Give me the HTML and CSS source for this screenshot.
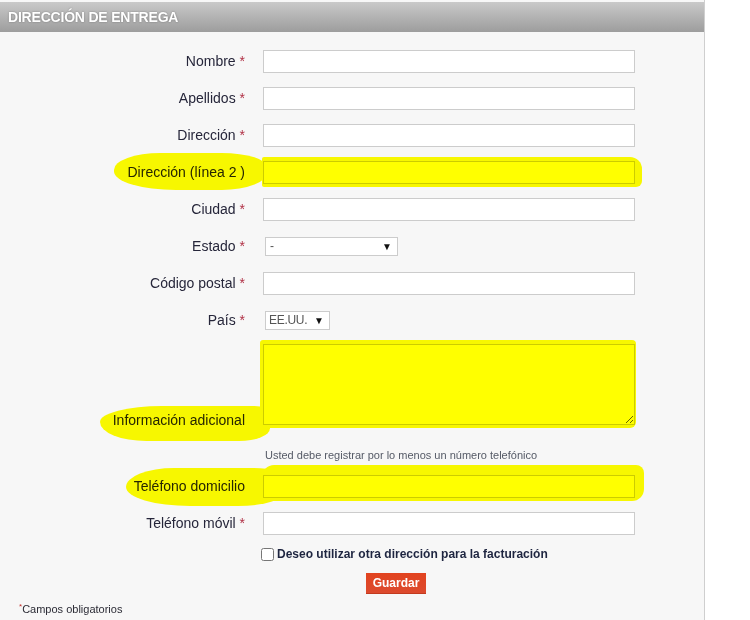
FILE: index.html
```html
<!DOCTYPE html>
<html lang="es">
<head>
<meta charset="utf-8">
<title>Dirección de entrega</title>
<link rel="stylesheet" href="styles.css">
</head>
<body>
<div class="panel">
  <h2 class="panel-title">DIRECCIÓN DE ENTREGA</h2>
  <form class="form">
    <div class="row">
      <label class="lbl">Nombre <span class="req">*</span></label>
      <input class="txt" type="text">
    </div>
    <div class="row">
      <label class="lbl">Apellidos <span class="req">*</span></label>
      <input class="txt" type="text">
    </div>
    <div class="row">
      <label class="lbl">Dirección <span class="req">*</span></label>
      <input class="txt" type="text">
    </div>
    <div class="row">
      <label class="lbl">Dirección (línea 2 )</label>
      <input class="txt" type="text">
    </div>
    <div class="row">
      <label class="lbl">Ciudad <span class="req">*</span></label>
      <input class="txt" type="text">
    </div>
    <div class="row">
      <label class="lbl">Estado <span class="req">*</span></label>
      <div class="sel sel-estado"><span class="sel-val">-</span><span class="sel-arrow">▼</span></div>
    </div>
    <div class="row">
      <label class="lbl">Código postal <span class="req">*</span></label>
      <input class="txt" type="text">
    </div>
    <div class="row row-pais">
      <label class="lbl">País <span class="req">*</span></label>
      <div class="sel sel-pais"><span class="sel-val">EE.UU.</span><span class="sel-arrow">▼</span></div>
    </div>
    <div class="row row-area">
      <label class="lbl">Información adicional</label>
      <textarea class="area"></textarea>
    </div>
    <div class="row row-help">
      <span></span>
      <p class="help">Usted debe registrar por lo menos un número telefónico</p>
    </div>
    <div class="row">
      <label class="lbl">Teléfono domicilio</label>
      <input class="txt" type="text">
    </div>
    <div class="row">
      <label class="lbl">Teléfono móvil <span class="req">*</span></label>
      <input class="txt" type="text">
    </div>
    <div class="row row-check">
      <span></span>
      <label class="check"><input type="checkbox" class="cb"> Deseo utilizar otra dirección para la facturación</label>
    </div>
    <div class="row row-btn">
      <span></span>
      <div><button type="button" class="btn">Guardar</button></div>
    </div>
    <p class="note"><span class="req-s">*</span>Campos obligatorios</p>
  </form>
  <div class="hl hl-1a"></div>
  <div class="hl hl-1b"></div>
  <div class="hl hl-2a"></div>
  <div class="hl hl-2b"></div>
  <div class="hl hl-3a"></div>
  <div class="hl hl-3b"></div>
</div>
</body>
</html>
```
FILE: styles.css
```css
html, body {
  margin: 0;
  padding: 0;
  background: #ffffff;
}
body {
  font-family: "Liberation Sans", Arial, sans-serif;
  color: #2b2b35;
}
.panel {
  position: relative;
  width: 705px;
  height: 620px;
  box-sizing: border-box;
  padding-top: 2px;
  background: #f7f7f7;
  border-right: 1px solid #cfcfcf;
  overflow: hidden;
}
.panel-title {
  margin: 0;
  height: 30px;
  line-height: 31px;
  padding-left: 8px;
  font-size: 14px;
  font-weight: bold;
  letter-spacing: -0.2px;
  color: #ffffff;
  background: linear-gradient(#c9c9c9, #9d9d9d);
  text-shadow: 0 0 2px rgba(0, 0, 0, 0.35);
}
.form {
  padding-top: 18px;
  margin: 0;
}
.row {
  display: grid;
  grid-template-columns: 245px 372px;
  column-gap: 18px;
  align-items: center;
  margin-bottom: 14px;
}
.lbl {
  text-align: right;
  font-size: 14px;
  line-height: 16px;
  margin-top: -1px;
  color: #26263a;
}
.req {
  color: #b03045;
}
.txt {
  display: block;
  box-sizing: border-box;
  width: 372px;
  height: 23px;
  margin: 0;
  border: 1px solid #cccccc;
  background: #ffffff;
  outline: none;
}
.sel {
  position: relative;
  box-sizing: border-box;
  height: 19px;
  margin: 2px 0 2px 2px;
  border: 1px solid #cccccc;
  background: #ffffff;
  font-size: 12px;
  color: #555;
  line-height: 17px;
  padding-left: 4px;
}
.sel-estado { width: 133px; }
.sel-pais { width: 65px; padding-left: 3px; letter-spacing: -0.3px; }
.sel-arrow {
  position: absolute;
  right: 5px;
  top: 0;
  font-size: 10px;
  color: #111;
  letter-spacing: 0;
}
.row-pais { margin-bottom: 12px; }
.row-area { align-items: end; margin-bottom: 24px; }
.row-area .lbl { margin-bottom: -3px; }
.area {
  display: block;
  box-sizing: border-box;
  width: 372px;
  height: 81px;
  margin: 0;
  border: 1px solid #cccccc;
  background: #ffffff;
  resize: both;
  outline: none;
}
.row-help { margin-bottom: 13px; }
.help {
  margin: 0 0 0 2px;
  font-size: 11px;
  line-height: 13px;
  color: #555a66;
}
.row-check { margin-top: -2px; margin-bottom: 12px; }
.check {
  display: flex;
  align-items: center;
  margin-left: -2px;
  font-size: 12px;
  font-weight: bold;
  color: #1e2540;
  gap: 3px;
}
.cb {
  width: 13px;
  height: 13px;
  margin: 0;
}
.row-btn { margin-bottom: 0; }
.btn {
  margin-left: 103px;
  width: 60px;
  height: 21px;
  padding: 0;
  border: none;
  border-bottom: 1px solid #c23a1f;
  background: linear-gradient(#e2431f, #dc4a2e);
  color: #ffffff;
  font-family: "Liberation Sans", Arial, sans-serif;
  font-size: 12px;
  font-weight: bold;
  cursor: pointer;
}
.note {
  margin: 9px 0 0 19px;
  font-size: 11px;
  color: #2b2b35;
}
.req-s {
  color: #c0302a;
  font-size: 8px;
  vertical-align: top;
  position: relative;
  top: -1px;
}
.hl {
  position: absolute;
  background: #ffff00;
  mix-blend-mode: multiply;
  pointer-events: none;
}
.hl-1a { left: 114px; top: 153px; width: 154px; height: 37px; border-radius: 30% 30% 30% 40% / 45% 40% 50% 50%; }
.hl-1b { left: 262px; top: 157px; width: 380px; height: 30px; border-radius: 2px 12px 6px 2px; }
.hl-2a { left: 100px; top: 406px; width: 170px; height: 35px; border-radius: 40% 10% 20% 30% / 50% 20% 40% 60%; }
.hl-2b { left: 260px; top: 340px; width: 376px; height: 88px; border-radius: 3px 4px 6px 2px; }
.hl-3a { left: 126px; top: 468px; width: 160px; height: 38px; border-radius: 30% 20% 30% 40% / 50% 30% 40% 50%; }
.hl-3b { left: 262px; top: 465px; width: 382px; height: 36px; border-radius: 12px 8px 12px 10px; }
```
